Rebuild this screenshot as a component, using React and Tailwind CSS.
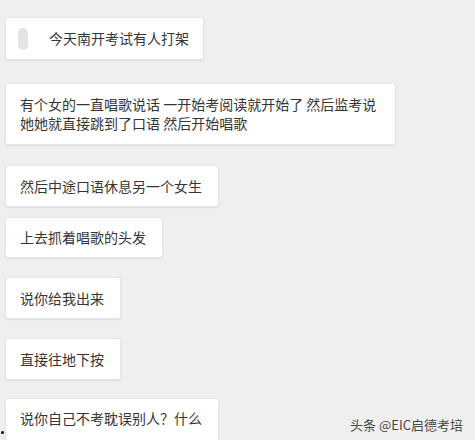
const messages = [
  { text: '今天南开考试有人打架', mt: 'mt-[17px]', h: 'h-[43px]', first: true },
  { text: '有个女的一直唱歌说话 一开始考阅读就开始了 然后监考说\n她她就直接跳到了口语 然后开始唱歌', mt: 'mt-[23px]', h: 'h-[62px]', wide: true },
  { text: '然后中途口语休息另一个女生', mt: 'mt-[20px]', h: 'h-[42px]' },
  { text: '上去抓着唱歌的头发', mt: 'mt-[10px]', h: 'h-[41px]' },
  { text: '说你给我出来', mt: 'mt-[19px]', h: 'h-[42px]' },
  { text: '直接往地下按', mt: 'mt-[19px]', h: 'h-[42px]' },
  { text: '说你自己不考耽误别人？什么', mt: 'mt-[18px]', h: 'h-[62px]', cut: true },
];

const Bubble = ({ text, mt, h, first, wide, cut }) => (
  <div
    className={`${mt} ${h} shrink-0 self-start flex ${cut ? 'items-start pt-[10px]' : 'items-center'} bg-white rounded-[3px] shadow-[0_1px_2px_rgba(0,0,0,0.08)] border border-[#e6e6e6] ${first ? 'pl-[12px] pr-[14px]' : wide ? 'pl-[14px] pr-[19px]' : 'pl-[14px] pr-[16px]'}`}
  >
    {first && <div className="w-[10px] h-[22px] rounded-full bg-[#e4e4e4] mr-[21px]"></div>}
    <p className="whitespace-pre text-[14px] leading-[19px] text-[#353535]">{text}</p>
  </div>
);

export default function App() {
  return (
    <div
      className="relative w-[475px] h-[440px] overflow-hidden bg-[#efefef] pl-[5px] flex flex-col"
      style={{ fontFamily: '"Noto Sans CJK SC", "Noto Sans", sans-serif' }}
    >
      {messages.map((m, i) => (
        <Bubble key={i} {...m} />
      ))}
      <div className="absolute left-[1px] bottom-[6px] w-[3px] h-[3px] rounded-full bg-black"></div>
      <div className="absolute right-[12px] top-[415px] text-[13px] leading-[20px] text-[#444] [text-shadow:0_0_2px_#fff]">
        头条 @EIC启德考培
      </div>
    </div>
  );
}
